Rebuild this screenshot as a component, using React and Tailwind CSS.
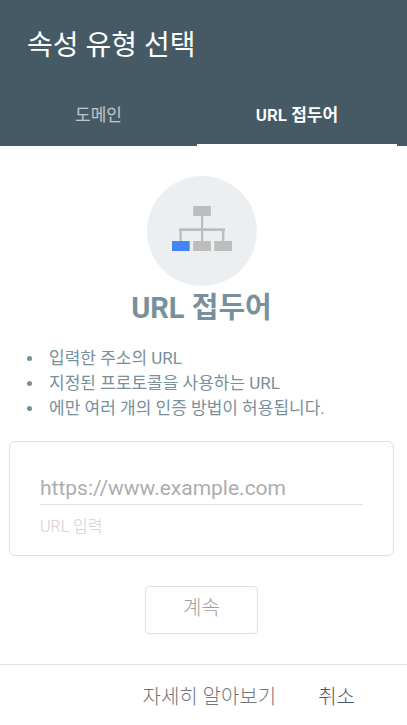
const features = [
  "입력한 주소의 URL",
  "지정된 프로토콜을 사용하는 URL",
  "에만 여러 개의 인증 방법이 허용됩니다.",
];

const SitemapIcon = () => {
  return (
    <svg width="60" height="50" viewBox="0 0 60 50" aria-hidden="true">
      <g fill="#bdbdbd">
        <rect x="21.2" y="0" width="17.7" height="10" />
        <rect x="29" y="10" width="2.3" height="25" />
        <rect x="7" y="22.3" width="46" height="2.7" />
        <rect x="7.4" y="25" width="2.4" height="10" />
        <rect x="50" y="25" width="2.4" height="10" />
        <rect x="21.2" y="35" width="17.7" height="10" />
        <rect x="42.2" y="35" width="17.8" height="10" />
      </g>
      <rect x="0" y="35" width="17.7" height="10" fill="#4285f4" />
    </svg>
  );
};

const App = () => {
  return (
    <div className="min-h-screen flex flex-col bg-white font-[Roboto,'Noto_Sans_CJK_KR',sans-serif]">
      {/* Header */}
      <header className="bg-[#455a64] text-white pt-6">
        <h1 className="px-[27px] text-[28px] leading-[44px]">속성 유형 선택</h1>
        <div role="tablist" className="flex mt-4 pr-[10px] text-[17px]">
          <button role="tab" aria-selected="false" className="flex-1 h-[62px] pt-1 border-b-2 border-transparent text-white/65">
            도메인
          </button>
          <button role="tab" aria-selected="true" className="basis-[200px] h-[62px] pt-1 border-b-2 border-white font-semibold">
            URL 접두어
          </button>
        </div>
      </header>

      {/* Property type */}
      <main className="flex-1 pt-[30px]">
        <div className="flex flex-col items-center pr-1">
          <div className="size-[110px] rounded-full bg-[#eceff1] flex items-center justify-center">
            <SitemapIcon />
          </div>
          <h2 className="text-[29px] leading-[44px] font-bold text-[#78909c]">URL 접두어</h2>
        </div>

        <ul className="mt-4 px-[27px] text-[17px] leading-[25px] text-[#78909c]">
          {features.map((feature) => (
            <li key={feature} className="flex items-center gap-[17px]">
              <span className="size-[5px] rounded-full bg-[#78909c]" />
              {feature}
            </li>
          ))}
        </ul>

        <div className="mt-5 ml-[9px] mr-[13px] px-[30px] pt-[30px] pb-4 border border-[#e0e0e0] rounded-md">
          <input
            id="url"
            type="text"
            placeholder="https://www.example.com"
            className="block w-full h-[33px] border-b border-[#e0e0e0] text-[21px] placeholder:text-[#adadad] outline-none"
          />
          <label htmlFor="url" className="block mt-[10px] text-base font-light text-[#d0d0d0]">
            URL 입력
          </label>
        </div>

        <div className="flex justify-center pr-1 my-[30px]">
          <button className="w-[113px] h-12 pb-1 border border-[#e0e0e0] rounded text-xl font-light text-[#9e9e9e]">
            계속
          </button>
        </div>
      </main>

      {/* Footer */}
      <footer className="flex justify-end gap-[42px] border-t border-[#e0e0e0] pl-4 pr-[52px] pt-[18px] pb-[14px] text-xl font-light">
        <a href="#more" className="text-[#757575]">자세히 알아보기</a>
        <button className="text-[#455a64]">취소</button>
      </footer>
    </div>
  );
};

export default App;
